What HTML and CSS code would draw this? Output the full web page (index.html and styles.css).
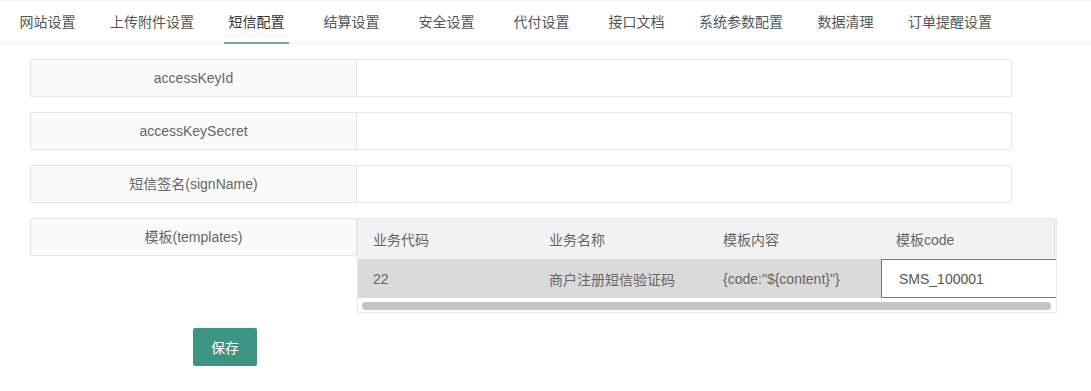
FILE: index.html
```html
<!DOCTYPE html>
<html lang="zh-CN">
<head>
<meta charset="utf-8">
<title>短信配置</title>
<link rel="stylesheet" href="styles.css">
</head>
<body>
<ul class="tabs">
  <li>网站设置</li>
  <li>上传附件设置</li>
  <li class="active">短信配置</li>
  <li>结算设置</li>
  <li>安全设置</li>
  <li>代付设置</li>
  <li>接口文档</li>
  <li>系统参数配置</li>
  <li>数据清理</li>
  <li>订单提醒设置</li>
</ul>
<div class="content">
  <div class="row">
    <label class="label">accessKeyId</label>
    <div class="input"></div>
  </div>
  <div class="row">
    <label class="label">accessKeySecret</label>
    <div class="input"></div>
  </div>
  <div class="row">
    <label class="label">短信签名(signName)</label>
    <div class="input"></div>
  </div>
  <div class="row row-table">
    <label class="label">模板(templates)</label>
    <div class="table-view">
      <div class="table">
        <div class="tr th">
          <div class="cell c1">业务代码</div>
          <div class="cell c2">业务名称</div>
          <div class="cell c3">模板内容</div>
          <div class="cell c4 last">模板code</div>
        </div>
        <div class="tr tb">
          <div class="cell c1">22</div>
          <div class="cell c2">商户注册短信验证码</div>
          <div class="cell c3">{code:"${content}"}</div>
          <div class="cell c4 edit">SMS_100001</div>
        </div>
      </div>
      <div class="scroll"><div class="thumb"></div></div>
    </div>
  </div>
  <button class="btn">保存</button>
</div>
</body>
</html>
```
FILE: styles.css
```css
* { box-sizing: border-box; }
html, body { margin: 0; padding: 0; background: #fff; }
body {
  font-family: "Liberation Sans", "Noto Sans CJK SC", sans-serif;
  font-size: 14px;
  color: #666;
}
.tabs {
  list-style: none;
  margin: 0;
  padding: 0;
  display: flex;
  border-top: 1px solid #f2f2f2;
  border-bottom: 1px solid #eeeeee;
  height: 44px;
}
.tabs li {
  box-sizing: content-box;
  position: relative;
  min-width: 65px;
  padding: 0 15px;
  height: 42px;
  line-height: 42px;
  text-align: center;
  color: #555;
  white-space: nowrap;
}
.tabs li.active { color: #333; }
.tabs li.active::after {
  content: "";
  position: absolute;
  left: 50%;
  bottom: -1px;
  width: 65px;
  margin-left: -32.5px;
  height: 2px;
  background: #6db27d;
}
.content {
  padding: 15px 0 0 30px;
}
.row {
  display: flex;
  width: 982px;
  height: 38px;
  margin-bottom: 15px;
}
.label {
  width: 327px;
  height: 38px;
  flex: none;
  border: 1px solid #e6e6e6;
  border-radius: 2px 0 0 2px;
  background: #fafafa;
  text-align: center;
  line-height: 36px;
  color: #666;
}
.input {
  flex: 1;
  height: 38px;
  border: 1px solid #e6e6e6;
  border-left: none;
  border-radius: 0 2px 2px 0;
  background: #fff;
}
.row-table {
  width: auto;
  height: auto;
  align-items: flex-start;
  margin-bottom: 15px;
}
.table-view {
  width: 700px;
  border: 1px solid #e6e6e6;
  border-top: none;
  overflow: hidden;
}
.table { width: 700px; }
.tr { display: flex; }
.th {
  height: 41px;
  background: #f2f2f2;
  border-top: 1px solid #ebebeb;
  border-bottom: 1px solid #f7f7f7;
}
.tb {
  height: 39px;
  background: #dadada;
}
.cell {
  padding-left: 15px;
  white-space: nowrap;
  display: flex;
  align-items: center;
  color: #666;
}
.c1 { width: 176px; }
.c2 { width: 174px; }
.c3 { width: 173px; }
.c4 { width: 177px; }
.th .last { border-right: 1px solid #e4e4e4; width: 174px; }
.edit {
  background: #fff;
  border: 1px solid #777;
  border-right: none;
  padding-left: 17px;
  color: #555;
}
.scroll {
  height: 14px;
  background: #fff;
  padding: 4px 5px 0 4px;
}
.thumb {
  height: 8px;
  border-radius: 4px;
  background: #c3c3c3;
}
.btn {
  display: block;
  margin-left: 163px;
  width: 64px;
  height: 38px;
  border: none;
  border-radius: 2px;
  background: #3e9483;
  color: #fff;
  font-family: "Liberation Sans", "Noto Sans CJK SC", sans-serif;
  font-size: 14px;
  padding: 0;
}
```
